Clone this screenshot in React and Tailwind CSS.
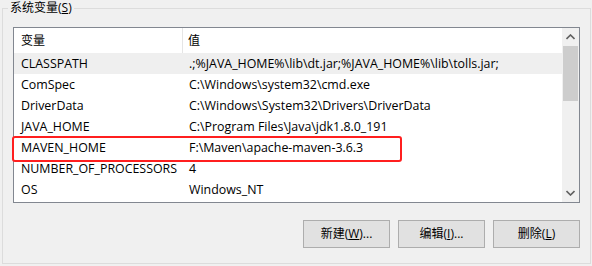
import React from "react";

const rows = [
  ["CLASSPATH", ".;%JAVA_HOME%\\lib\\dt.jar;%JAVA_HOME%\\lib\\tolls.jar;", true],
  ["ComSpec", "C:\\Windows\\system32\\cmd.exe"],
  ["DriverData", "C:\\Windows\\System32\\Drivers\\DriverData"],
  ["JAVA_HOME", "C:\\Program Files\\Java\\jdk1.8.0_191"],
  ["MAVEN_HOME", "F:\\Maven\\apache-maven-3.6.3"],
  ["NUMBER_OF_PROCESSORS", "4"],
  ["OS", "Windows_NT"],
];

const font = { fontFamily: '"Segoe UI", "Open Sans", "Noto Sans CJK SC", sans-serif' };

function Btn({ pre, k, post }) {
  return (
    <button className="w-[87px] h-[28px] bg-[#e1e1e1] border border-[#adadad] text-[12px] text-black flex items-center justify-center">
      {pre}(<span className="underline">{k}</span>){post}
    </button>
  );
}

export default function App() {
  return (
    <div
      className="relative w-[592px] h-[266px] bg-[#f0f0f0] text-black text-[12px] overflow-hidden"
      style={font}
    >
      <div className="relative ml-[2px] mt-[8px] w-[589px] h-[256px] border border-[#dcdcdc] pl-[10px] pt-[18px]">
        <div className="absolute left-[5px] top-[-9px] px-[2px] bg-[#f0f0f0] leading-[16px]">
          系统变量(<span className="underline">S</span>)
        </div>
        <div className="w-[567px] h-[176px] border border-[#828790] bg-white flex">
          <div className="flex-1 flex flex-col text-[12.4px]">
            <div className="h-[25px] flex items-center text-[12px]">
              <div className="w-[169px] h-full pl-[7px] pt-[1px] flex items-center border-r border-[#e5e5e5]">变量</div>
              <div className="pl-[5px] pt-[1px]">值</div>
            </div>
            {rows.map(([k, v, hl]) => (
              <div key={k} className={"h-[21px] pt-[2px] flex items-center whitespace-nowrap " + (hl ? "bg-[#efefef]" : "")}>
                <div className="w-[169px] pl-[7px]">{k}</div>
                <div className="pl-[6px]">{v}</div>
              </div>
            ))}
          </div>
          <div className="w-[17px] h-full bg-[#f0f0f0] flex flex-col items-center">
            <div className="h-[18px] w-full flex items-center justify-center">
              <svg width="9" height="6" viewBox="0 0 9 6">
                <path d="M0.5 5 L4.5 1 L8.5 5" stroke="#606060" strokeWidth="1.6" fill="none" />
              </svg>
            </div>
            <div className="w-[15px] h-[55px] bg-[#cdcdcd]" />
            <div className="flex-1" />
            <div className="h-[18px] w-full flex items-center justify-center">
              <svg width="9" height="6" viewBox="0 0 9 6">
                <path d="M0.5 1 L4.5 5 L8.5 1" stroke="#606060" strokeWidth="1.6" fill="none" />
              </svg>
            </div>
          </div>
        </div>
        <div className="mt-[17px] w-[567px] flex justify-end gap-[8px]">
          <Btn pre="新建" k="W" post="..." />
          <Btn pre="编辑" k="I" post="..." />
          <Btn pre="删除" k="L" post="" />
        </div>
      </div>
      <div className="absolute left-[12px] top-[136px] w-[390px] h-[26px] border-2 border-[#ff1f1f] rounded-[3px]" />
    </div>
  );
}
